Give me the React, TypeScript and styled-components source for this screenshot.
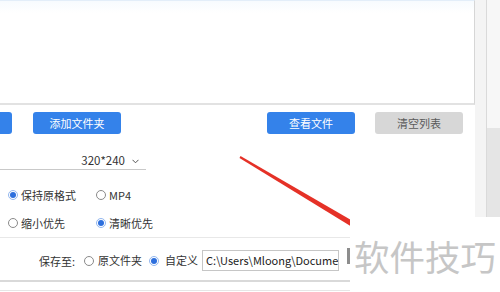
import React from 'react';
import styled, { createGlobalStyle } from 'styled-components';

const GlobalStyle = createGlobalStyle`
  html, body {
    margin: 0;
    padding: 0;
    background: #ffffff;
  }
  body {
    font-family: "Noto Sans CJK SC", "Noto Sans", sans-serif;
  }
`;

const Screen = styled.div`
  position: relative;
  width: 500px;
  height: 292px;
  overflow: hidden;
  display: flex;
  background: #ffffff;
  color: #333333;
  font-size: 11px;
`;

const Main = styled.div`
  width: 475px;
  flex-shrink: 0;
  display: flex;
  flex-direction: column;
`;

const ListPanel = styled.div`
  height: 102px;
  border-top: 1px solid #e3eef9;
  border-right: 1px solid #d6d6d6;
  border-bottom: 2px solid #e2e2e2;
  background: linear-gradient(#f7fbfe, #ffffff 12px);
`;

const ButtonRow = styled.div`
  margin-top: 7px;
  height: 22px;
  display: flex;
  justify-content: space-between;
  padding-right: 12px;
`;

const ButtonGroup = styled.div<{ $gap: number; $shift?: number }>`
  display: flex;
  gap: ${p => p.$gap}px;
  margin-left: ${p => p.$shift ?? 0}px;
`;

const ActionButton = styled.div<{ $muted?: boolean }>`
  width: 88px;
  height: 22px;
  border-radius: 3px;
  display: flex;
  align-items: center;
  justify-content: center;
  font-size: 11px;
  line-height: 1;
  background: ${p => (p.$muted ? '#d7d7d7' : '#3482ea')};
  color: ${p => (p.$muted ? '#5b5b5b' : '#ffffff')};
`;

const SizeSelect = styled.div`
  margin-top: 19px;
  width: 146px;
  height: 17px;
  box-sizing: border-box;
  border-bottom: 1px solid #c9c9c9;
  display: flex;
  align-items: center;
  justify-content: flex-end;
  gap: 7px;
  padding-right: 7px;
  line-height: 1;
  font-size: 11.5px;
  color: #333333;
`;

const OptionGrid = styled.div<{ $top: number }>`
  margin-top: ${p => p.$top}px;
  padding-left: 8px;
  height: 16px;
  display: grid;
  grid-template-columns: 88px auto;
  align-items: center;
`;

const Option = styled.label<{ $gap?: number; $left?: number }>`
  display: flex;
  align-items: center;
  gap: ${p => p.$gap ?? 3}px;
  margin-left: ${p => p.$left ?? 0}px;
  line-height: 1;
  white-space: nowrap;
`;

const RadioDot = styled.span<{ $checked?: boolean }>`
  width: 10px;
  height: 10px;
  box-sizing: border-box;
  border-radius: 50%;
  flex-shrink: 0;
  border: 1px solid ${p => (p.$checked ? '#93b7ef' : '#8a8a8a')};
  display: flex;
  align-items: center;
  justify-content: center;
  &::after {
    content: '';
    width: 6px;
    height: 6px;
    border-radius: 50%;
    background: ${p => (p.$checked ? '#2d6fdd' : 'transparent')};
  }
`;

const Divider = styled.div<{ $top: number; $size?: number; $color?: string }>`
  margin-top: ${p => p.$top}px;
  height: ${p => p.$size ?? 1}px;
  background: ${p => p.$color ?? '#e8e8e8'};
  flex-shrink: 0;
`;

const SaveRow = styled.div`
  margin-top: 12px;
  height: 21px;
  padding-left: 39px;
  display: flex;
  align-items: center;
`;

const PathInput = styled.div`
  margin-left: 4px;
  width: 137px;
  height: 21px;
  box-sizing: border-box;
  border: 1px solid #c6c6c6;
  padding-left: 3px;
  display: flex;
  align-items: center;
  overflow: hidden;
  white-space: nowrap;
  color: #222222;
  line-height: 1;
`;

const BrowseButton = styled.div`
  margin-left: 8px;
  width: 30px;
  height: 16px;
  background: #8d8d8d;
  align-self: flex-start;
  margin-top: -2px;
`;

const Gutter = styled.div`
  flex: 1;
  display: flex;
`;

const GutterTrack = styled.div`
  width: 11px;
  background: #f4f4f4;
  border-right: 1px solid #dadada;
`;

const ScrollArea = styled.div`
  flex: 1;
  display: flex;
  flex-direction: column;
  background: #e5e5e5;
`;

const ScrollTop = styled.div`
  height: 128px;
  background: #f7f7f7;
`;

const Annotation = styled.svg`
  position: absolute;
  left: 0;
  top: 0;
  pointer-events: none;
  z-index: 1;
`;

const Watermark = styled.div`
  position: absolute;
  left: 350px;
  top: 217px;
  right: 0;
  bottom: 0;
  z-index: 2;
  background: #ffffff;
  padding: 3px 0 0 4px;
  display: flex;
  align-items: center;
  font-size: 35.5px;
  line-height: 1;
  color: #c6c6c6;
  white-space: nowrap;
`;

const Chevron = () => (
  <svg width="7" height="5" viewBox="0 0 7 5">
    <path d="M0.5 0.8 L3.5 3.8 L6.5 0.8" fill="none" stroke="#555" strokeWidth="1" />
  </svg>
);

const Radio = ({ checked, label, gap, left }: { checked?: boolean; label: string; gap?: number; left?: number }) => (
  <Option $gap={gap} $left={left}>
    <RadioDot $checked={checked} />
    {label}
  </Option>
);

const App = () => {
  return (
    <>
      <GlobalStyle />
      <Screen>
        <Main>
          <ListPanel />
          <ButtonRow>
            <ButtonGroup $gap={21} $shift={-76}>
              <ActionButton />
              <ActionButton>添加文件夹</ActionButton>
            </ButtonGroup>
            <ButtonGroup $gap={20}>
              <ActionButton>查看文件</ActionButton>
              <ActionButton $muted>清空列表</ActionButton>
            </ButtonGroup>
          </ButtonRow>
          <SizeSelect>
            320*240
            <Chevron />
          </SizeSelect>
          <OptionGrid $top={17}>
            <Radio checked label="保持原格式" />
            <Radio label="MP4" />
          </OptionGrid>
          <OptionGrid $top={12}>
            <Radio label="缩小优先" />
            <Radio checked label="清晰优先" />
          </OptionGrid>
          <Divider $top={6} />
          <SaveRow>
            保存至:
            <Radio label="原文件夹" left={9} gap={4} />
            <Radio checked label="自定义" left={7} gap={6} />
            <PathInput>C:\Users\Mloong\Documents\</PathInput>
            <BrowseButton />
          </SaveRow>
          <Divider $top={9} $size={2} $color="#d9d9d9" />
          <Divider $top={8} $color="#e6e6e6" />
        </Main>
        <Gutter>
          <GutterTrack />
          <ScrollArea>
            <ScrollTop />
          </ScrollArea>
        </Gutter>
        <Annotation width="500" height="292" viewBox="0 0 500 292">
          <polygon points="240.5,156.1 239.5,157.9 358.6,230.9 361.4,226.1" fill="#e53127" />
        </Annotation>
        <Watermark>软件技巧</Watermark>
      </Screen>
    </>
  );
};

export default App;
